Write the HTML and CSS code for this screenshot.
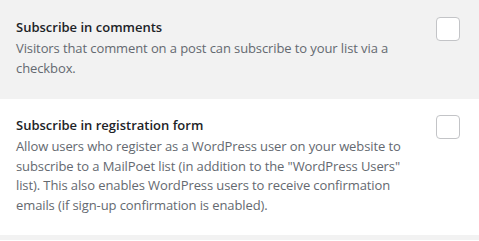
FILE: index.html
```html
<!DOCTYPE html>
<html>
<head>
<meta charset="utf-8">
<link rel="stylesheet" href="styles.css">
</head>
<body>
<div class="settings">
  <div class="row row-alt row-first">
    <div class="text">
      <div class="title">Subscribe in comments</div>
      <div class="desc">Visitors that comment on a post can subscribe to your list via a checkbox.</div>
    </div>
    <span class="check"></span>
  </div>
  <div class="row">
    <div class="text">
      <div class="title">Subscribe in registration form</div>
      <div class="desc">Allow users who register as a WordPress user on your website to subscribe to a MailPoet list (in addition to the "WordPress Users" list). This also enables WordPress users to receive confirmation emails (if sign-up confirmation is enabled).</div>
    </div>
    <span class="check"></span>
  </div>
  <div class="row row-alt row-last"></div>
</div>
</body>
</html>
```
FILE: styles.css
```css
html, body {
  margin: 0;
  padding: 0;
  background: #ffffff;
  overflow: hidden;
}
body {
  font-family: "Open Sans", "Noto Sans", sans-serif;
  -webkit-font-smoothing: antialiased;
}
.settings {
  display: flex;
  flex-direction: column;
}
.row {
  display: flex;
  align-items: flex-start;
  gap: 20px;
  padding: 16px 19px 20px 16px;
}
.row-alt {
  background: #f2f2f2;
}
.row-first {
  padding-top: 17px;
  padding-bottom: 21px;
}
.row-last {
  height: 5px;
  padding: 0;
}
.text {
  flex: 1;
  min-width: 0;
}
.title {
  font-size: 13px;
  line-height: 20px;
  font-weight: 600;
  color: #1d2327;
  margin-bottom: 2px;
}
.desc {
  font-size: 13px;
  line-height: 19.5px;
  letter-spacing: -0.1px;
  color: #646970;
}
.check {
  flex: none;
  width: 22px;
  height: 22px;
  border: 1px solid #c3c4c7;
  border-radius: 4px;
  background: #ffffff;
  box-sizing: content-box;
}
```
